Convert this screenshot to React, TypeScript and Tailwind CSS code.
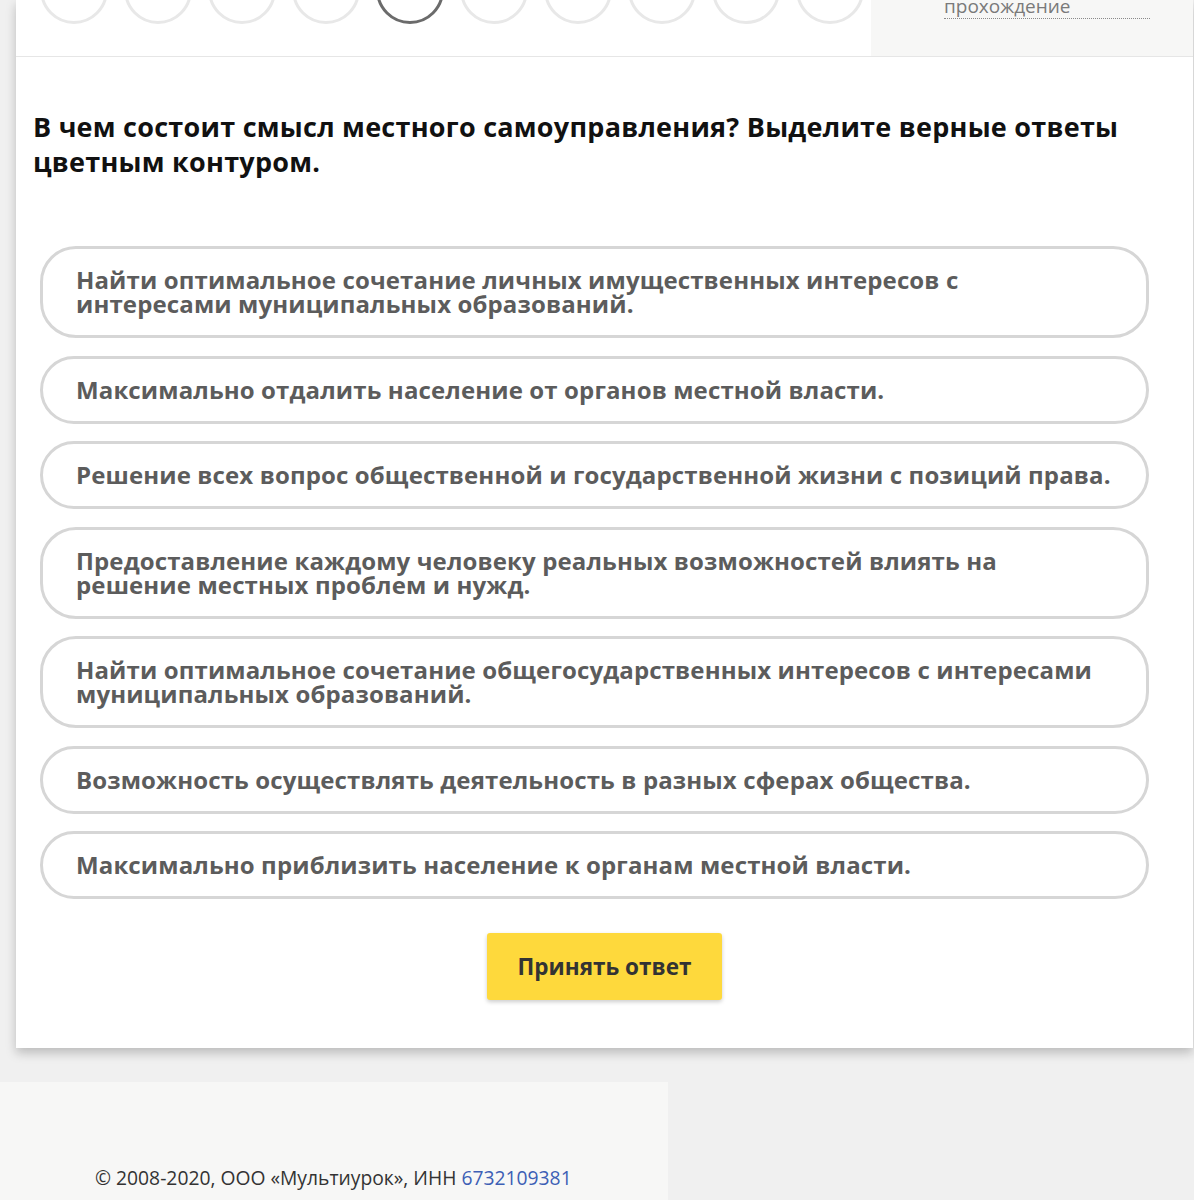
import React from "react";

const options: string[][] = [
  ["Найти оптимальное сочетание личных имущественных интересов с", "интересами муниципальных образований."],
  ["Максимально отдалить население от органов местной власти."],
  ["Решение всех вопрос общественной и государственной жизни с позиций права."],
  ["Предоставление каждому человеку реальных возможностей влиять на", "решение местных проблем и нужд."],
  ["Найти оптимальное сочетание общегосударственных интересов с интересами", "муниципальных образований."],
  ["Возможность осуществлять деятельность в разных сферах общества."],
  ["Максимально приблизить население к органам местной власти."],
];

export default function App() {
  const circles = Array.from({ length: 10 }, (_, i) => i);
  return (
    <div className="min-h-screen bg-[#f0f0f0] font-['Open_Sans',sans-serif] overflow-hidden">
      <div className="ml-[16px] w-[1177px] bg-white shadow-[0_5px_10px_rgba(0,0,0,0.22)]">
        <div className="flex h-[57px] border-b border-[#e6e6e6]">
          <div className="flex-1 overflow-hidden">
            <div className="flex gap-[16px] pl-[24px] -mt-[44px]">
              {circles.map((i) => (
                <div
                  key={i}
                  className={
                    i === 4
                      ? "w-[68px] h-[68px] shrink-0 rounded-full border-[3px] border-[#6b6b6b]"
                      : "w-[68px] h-[68px] shrink-0 rounded-full border-[3px] border-[#e8e8e8]"
                  }
                />
              ))}
            </div>
          </div>
          <div className="w-[322px] bg-[#f7f7f6] pl-[73px] overflow-hidden">
            <div className="w-[206px] -mt-[5px] text-[19px] leading-[23px] text-[#7a7a7a] border-b border-dotted border-[#8a8a8a]">
              прохождение
            </div>
          </div>
        </div>

        <div className="pl-[17px] pt-[52px] text-[27px] leading-[35px] tracking-[0.25px] font-bold text-[#111]">
          В чем состоит смысл местного самоуправления? Выделите верные ответы
          <br />
          цветным контуром.
        </div>

        <div className="ml-[24px] w-[1109px] mt-[67px] flex flex-col gap-[17.5px]">
          {options.map((lines, idx) => (
            <div
              key={idx}
              className="border-[3px] border-[#d6d6d6] rounded-[36px] pl-[33px] pr-[20px] py-[19px] text-[24px] leading-[24px] tracking-[0.13px] font-bold text-[#5c5c5c] whitespace-nowrap"
            >
              {lines.map((l, j) => (
                <div key={j}>{l}</div>
              ))}
            </div>
          ))}
        </div>

        <div className="flex justify-center pt-[34px] pb-[48px]">
          <button className="w-[235px] h-[67px] rounded-[3px] bg-[#fed93c] shadow-[0_2px_4px_rgba(0,0,0,0.2)] text-[22.5px] font-bold text-[#333]">
            Принять ответ
          </button>
        </div>
      </div>

      <div className="mt-[34px] w-[668px] h-[200px] bg-[#f7f7f6] pt-[83px] pl-[95px] text-[19.3px] leading-[26px] text-[#333]">
        © 2008-2020, ООО «Мультиурок», ИНН <span className="text-[#3d5fb5]">6732109381</span>
      </div>
    </div>
  );
}
